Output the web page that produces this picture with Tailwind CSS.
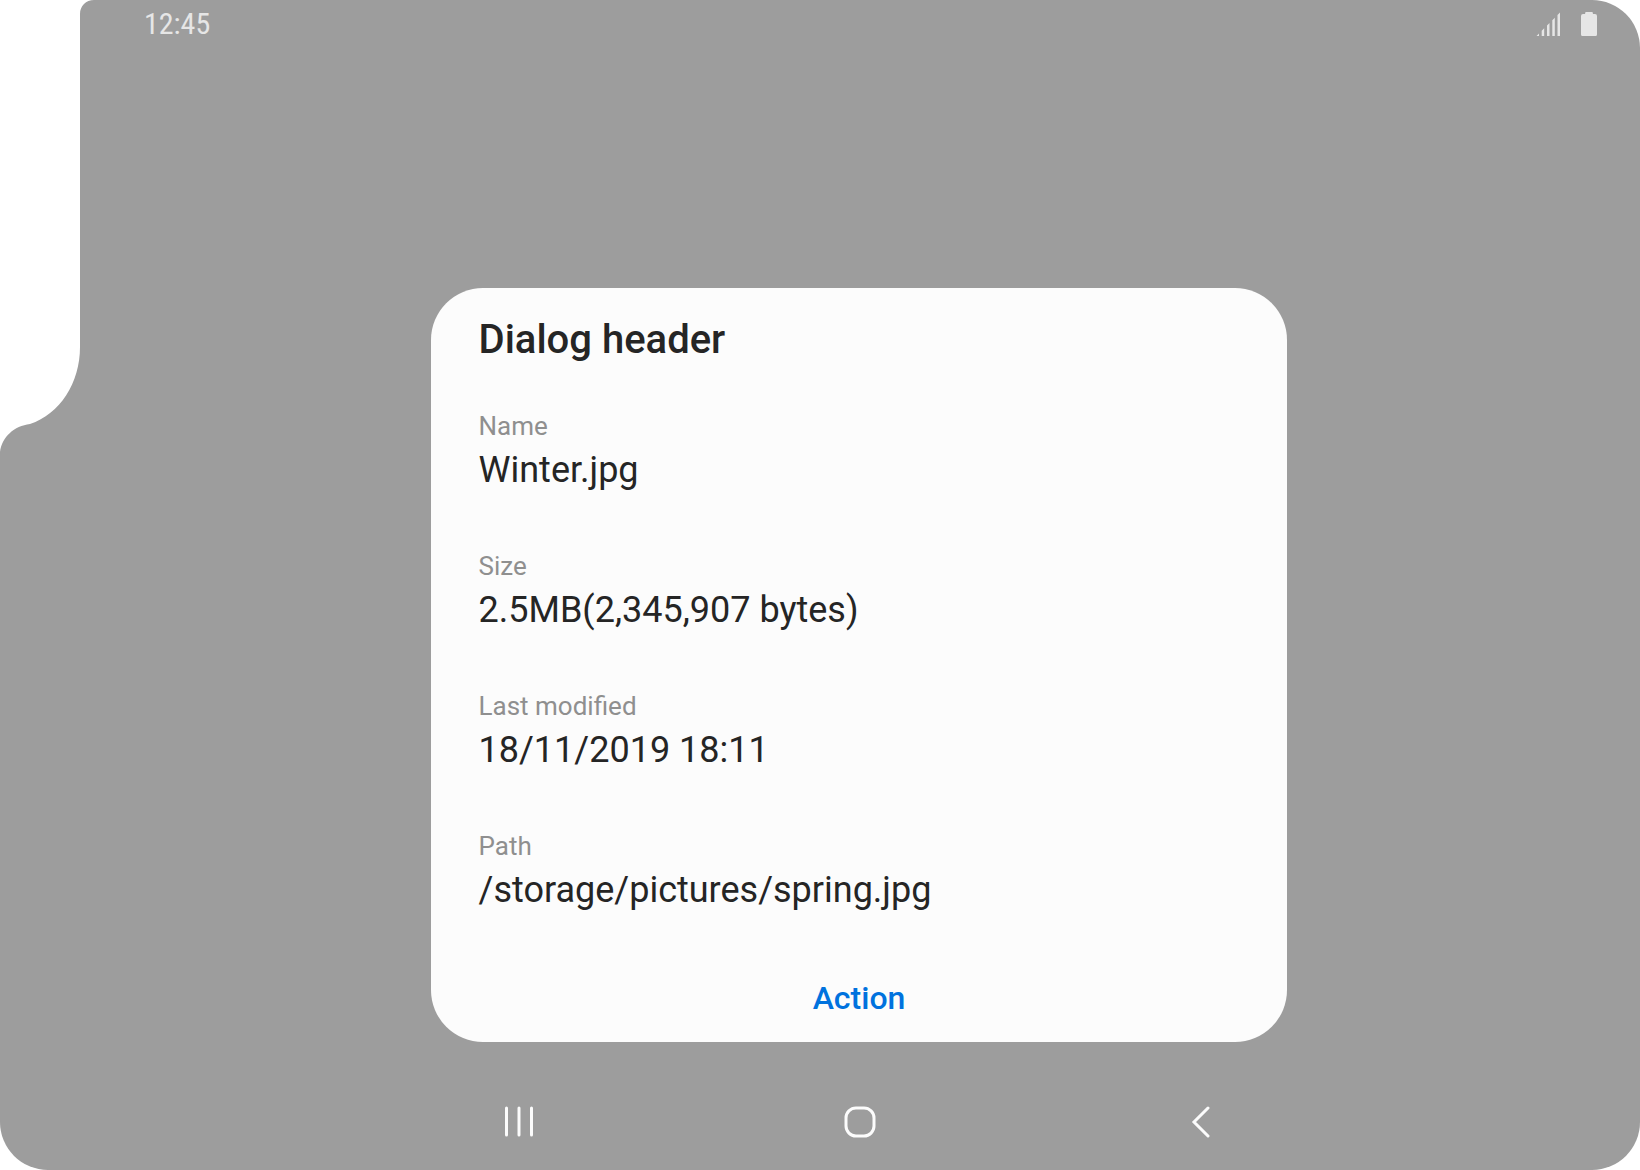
<!DOCTYPE html>
<html lang="en">
<head>
<meta charset="utf-8">
<meta name="viewport" content="width=device-width, initial-scale=1">
<title>Dialog header</title>
<script src="https://cdn.jsdelivr.net/npm/@tailwindcss/browser@4"></script>
</head>
<body class="bg-white font-['Roboto',sans-serif]">
<div class="relative flex min-h-screen flex-col overflow-hidden rounded-r-[48px] rounded-bl-[48px] bg-[#9d9d9d] pl-20">
  <!-- camera notch -->
  <svg class="absolute top-0 left-0" width="94" height="452" viewBox="0 0 94 452" fill="#fff" aria-hidden="true">
    <path d="M0 0H94C86 0 80 6 80 14V347C80 383 60 414 30 424C14 426 2 437 0 452Z"/>
  </svg>

  <header class="flex h-12 items-center justify-between pr-[43px] pl-16 text-[#e6e6e6]">
    <time class="font-['Roboto_Condensed','Liberation_Sans_Narrow',sans-serif] text-[30px] leading-12">12:45</time>
    <div class="flex items-center gap-5">
      <svg width="25" height="24" viewBox="0 0 25 24" fill="currentColor" role="img" aria-label="Signal">
        <path d="M0.500 24L3 21.500V24ZM5.700 24V18.800L8.200 16.300V24ZM11 24V13.500L13.500 11V24ZM16.300 24V8.200L18.800 5.700V24ZM21.500 24V3L24 0.500V24Z"/>
      </svg>
      <svg width="16" height="24" viewBox="0 0 16 24" fill="currentColor" role="img" aria-label="Battery">
        <path d="M4.500 0H11.500L12 2H14Q16 2 16 4V22.500Q16 24 14.500 24H1.500Q0 24 0 22.500V4Q0 2 2 2H4Z"/>
      </svg>
    </div>
  </header>

  <main class="flex flex-1 flex-col items-center justify-end pr-0.5 pb-[31px]">
    <section role="dialog" aria-labelledby="dialog-title" class="flex w-[55%] flex-col rounded-[52px] bg-[#fcfcfc] px-12 pt-7 pb-6 text-[#252525]">
      <h1 id="dialog-title" class="text-[40px] leading-12 font-medium">Dialog header</h1>
      <dl class="mt-[46px] flex flex-col gap-[58px]">
        <div class="flex flex-col gap-[6px]">
          <dt class="text-[26px] leading-8 text-[#8f8f8f]">Name</dt>
          <dd class="text-[36px] leading-11">Winter.jpg</dd>
        </div>
        <div class="flex flex-col gap-[6px]">
          <dt class="text-[26px] leading-8 text-[#8f8f8f]">Size</dt>
          <dd class="text-[36px] leading-11">2.5MB(2,345,907 bytes)</dd>
        </div>
        <div class="flex flex-col gap-[6px]">
          <dt class="text-[26px] leading-8 text-[#8f8f8f]">Last modified</dt>
          <dd class="text-[36px] leading-11">18/11/2019 18:11</dd>
        </div>
        <div class="flex flex-col gap-[6px]">
          <dt class="text-[26px] leading-8 text-[#8f8f8f]">Path</dt>
          <dd class="text-[36px] leading-11">/storage/pictures/spring.jpg</dd>
        </div>
      </dl>
      <button type="button" class="mt-[66px] self-center text-[32px] leading-10 font-medium text-[#0072de]">Action</button>
    </section>
  </main>

  <nav class="mx-auto grid h-[97px] w-full max-w-[1023px] grid-cols-3 text-[#fcfcfc]" aria-label="System">
    <button type="button" class="flex items-center justify-center" aria-label="Recent apps">
      <svg width="32" height="32" viewBox="0 0 32 32" fill="none" stroke="currentColor" stroke-width="3" stroke-linecap="round">
        <path d="M3.500 2V29M16 2V29M28.500 2V29"/>
      </svg>
    </button>
    <button type="button" class="flex items-center justify-center" aria-label="Home">
      <svg width="32" height="32" viewBox="0 0 32 32" fill="none" stroke="currentColor" stroke-width="3">
        <rect x="2" y="2" width="28" height="28" rx="10"/>
      </svg>
    </button>
    <button type="button" class="flex items-center justify-center" aria-label="Back">
      <svg width="32" height="32" viewBox="0 0 32 32" fill="none" stroke="currentColor" stroke-width="3" stroke-linecap="round" stroke-linejoin="miter">
        <path d="M23 2L9 16L23 30"/>
      </svg>
    </button>
  </nav>
</div>
</body>
</html>
